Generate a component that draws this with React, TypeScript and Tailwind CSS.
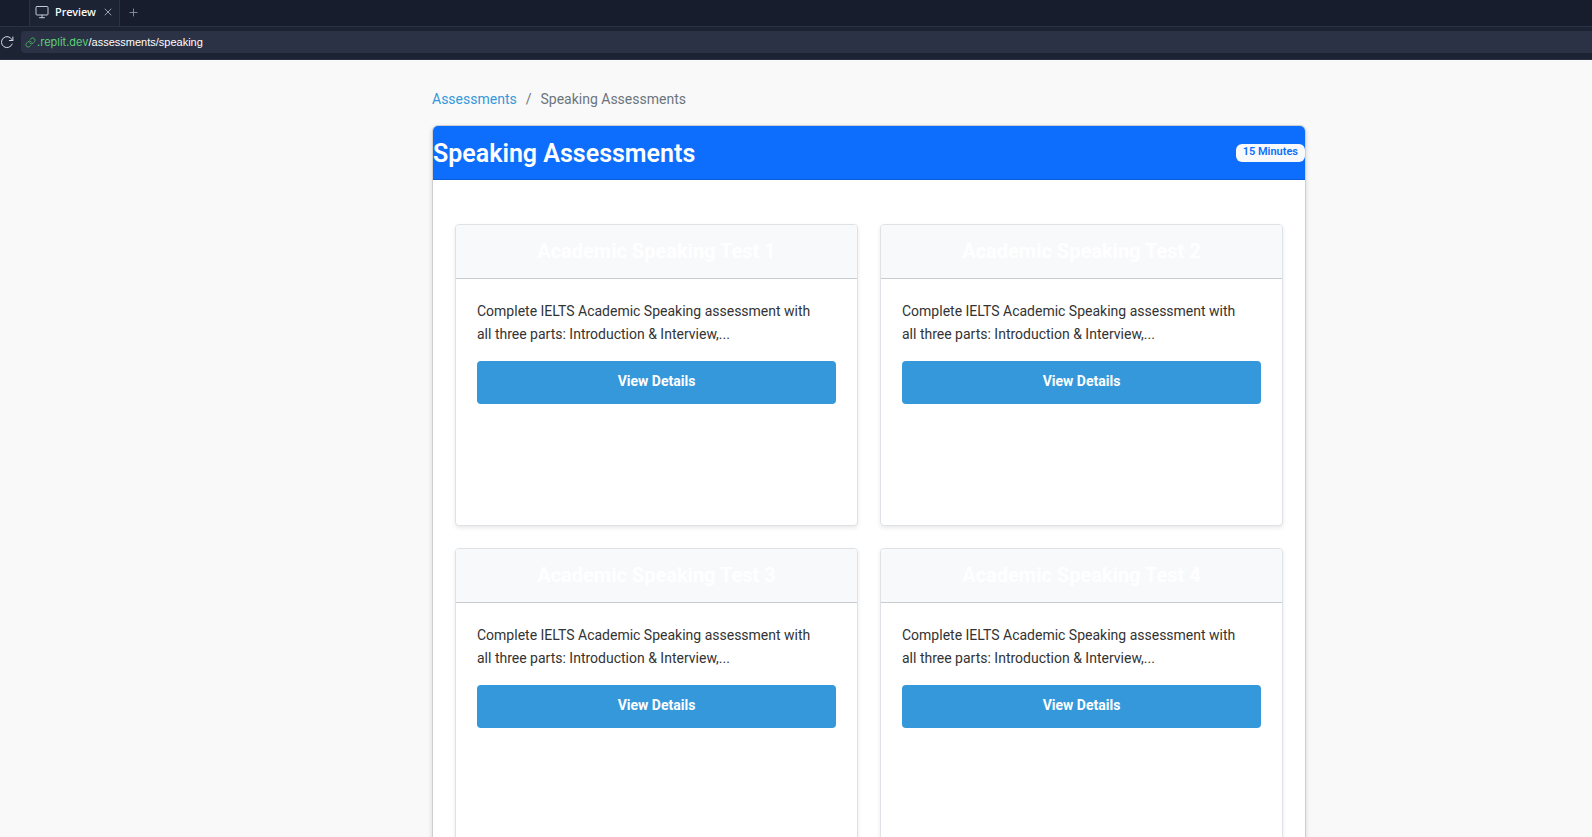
const tests = [1, 2, 3, 4];

function TestCard({ n }: { n: number }) {
  return (
    <article className="flex min-h-[302px] flex-col overflow-hidden rounded border border-[#dee2e6] bg-white shadow-[0_2px_4px_rgba(0,0,0,0.09)]">
      <h2 className="border-b border-[#c8cbcf] bg-[#f8f9fb] px-5 pt-3 pb-[13px] text-center text-[20px] leading-7 font-bold text-white">
        Academic Speaking Test {n}
      </h2>
      <div className="flex flex-col gap-[15px] px-[21px] pt-[21px]">
        <p className="pr-3 text-[14px] leading-[23px] text-[#333333]">
          Complete IELTS Academic Speaking assessment with all three parts: Introduction &amp; Interview,...
        </p>
        <a
          href="#"
          className="block h-[43px] rounded bg-[#3498db] pt-[9px] text-center text-[14px] leading-[23px] font-bold text-white"
        >
          View Details
        </a>
      </div>
    </article>
  );
}

function BrowserBar() {
  return (
    <header className="shrink-0 bg-[#1c2333] font-['Inter',sans-serif] text-white">
      <div className="flex h-[27px] items-stretch border-b border-[#2b3245] bg-[#171d2d] pl-[29px]">
        <div className="flex items-center gap-[6px] border-x border-[#2b3245] bg-[#1c2333] px-[5px] pb-[2px]">
          <svg width="14" height="14" viewBox="0 0 14 14" fill="none" stroke="#c5cad6" strokeLinecap="round" strokeLinejoin="round" aria-hidden="true">
            <rect x="1" y="1.5" width="12" height="8.5" rx="1" />
            <path d="M7 10v2.7M4.5 12.7h5" />
          </svg>
          <span className="font-['Noto_Sans',sans-serif] text-[11px] leading-4 font-medium">Preview</span>
          <button aria-label="Close tab" className="flex h-4 w-3 items-center justify-center">
            <svg width="8" height="8" viewBox="0 0 8 8" stroke="#9aa1b1" strokeLinecap="round" aria-hidden="true">
              <path d="M1 1l6 6M7 1l-6 6" />
            </svg>
          </button>
        </div>
        <button aria-label="New tab" className="flex w-7 items-center justify-center pb-[2px]">
          <svg width="9" height="9" viewBox="0 0 9 9" stroke="#7f8797" strokeLinecap="round" aria-hidden="true">
            <path d="M4.5 1v7M1 4.5h7" />
          </svg>
        </button>
      </div>
      <div className="flex h-[33px] items-center border-b border-[#2b3245] pb-[2px]">
        <button aria-label="Reload" className="flex w-[21px] shrink-0 justify-start">
          <svg width="14" height="14" viewBox="0 0 14 14" fill="none" stroke="#d5d9e2" strokeLinecap="round" strokeLinejoin="round" aria-hidden="true">
            <path d="M12.2 9a5.5 5.5 0 1 1-.3-4.4L12.8 5.5M12.9 2v3.5H9.4" />
          </svg>
        </button>
        <div className="flex h-[22px] grow items-center gap-px rounded-l bg-[#2b3245] pl-1 text-[11px] leading-4">
          <svg width="11" height="11" viewBox="0 0 24 24" fill="none" stroke="#4caf64" strokeWidth="2" strokeLinecap="round" strokeLinejoin="round" aria-hidden="true">
            <path d="M10 13a5 5 0 0 0 7.54.54l3-3a5 5 0 0 0-7.07-7.07l-1.72 1.71" />
            <path d="M14 11a5 5 0 0 0-7.54-.54l-3 3a5 5 0 0 0 7.07 7.07l1.71-1.71" />
          </svg>
          <span className="font-['Liberation_Sans',sans-serif]">
            <span className="font-['Inter',sans-serif] text-[#5bd075]">.replit.dev</span>/assessments/speaking
          </span>
        </div>
      </div>
    </header>
  );
}

export default function App() {
  return (
    <div className="flex h-screen flex-col bg-[#f9f9f9] font-['Roboto',sans-serif]">
      <BrowserBar />
      <main className="grow overflow-y-auto pt-[27px] pl-[146px] [scrollbar-width:none]">
        <div className="mx-auto max-w-[874px]">
          <nav aria-label="Breadcrumb" className="flex gap-[9px] text-[14px] leading-6 text-[#6c757d]">
            <a href="#" className="text-[#3498db]">Assessments</a>
            <span>/</span>
            <span>Speaking Assessments</span>
          </nav>
          <section className="mt-[14px] mb-6 overflow-hidden rounded-md border border-[#cfcfcf] bg-white shadow-[0_2px_5px_rgba(0,0,0,0.14)]">
            <div className="flex h-[54px] items-center justify-between border-b border-[#0b5ed7] bg-[#0d6efd]">
              <h1 className="pt-[2px] text-[25px] leading-8 font-semibold text-white">Speaking Assessments</h1>
              <span className="h-[18px] rounded-md bg-[#f8f9fa] px-[7px] text-[11px] leading-4 font-semibold text-[#0d6efd]">
                15 Minutes
              </span>
            </div>
            <div className="grid grid-cols-2 gap-[22px] px-[22px] pt-11 pb-[22px]">
              {tests.map((n) => (
                <TestCard key={n} n={n} />
              ))}
            </div>
          </section>
        </div>
      </main>
    </div>
  );
}
